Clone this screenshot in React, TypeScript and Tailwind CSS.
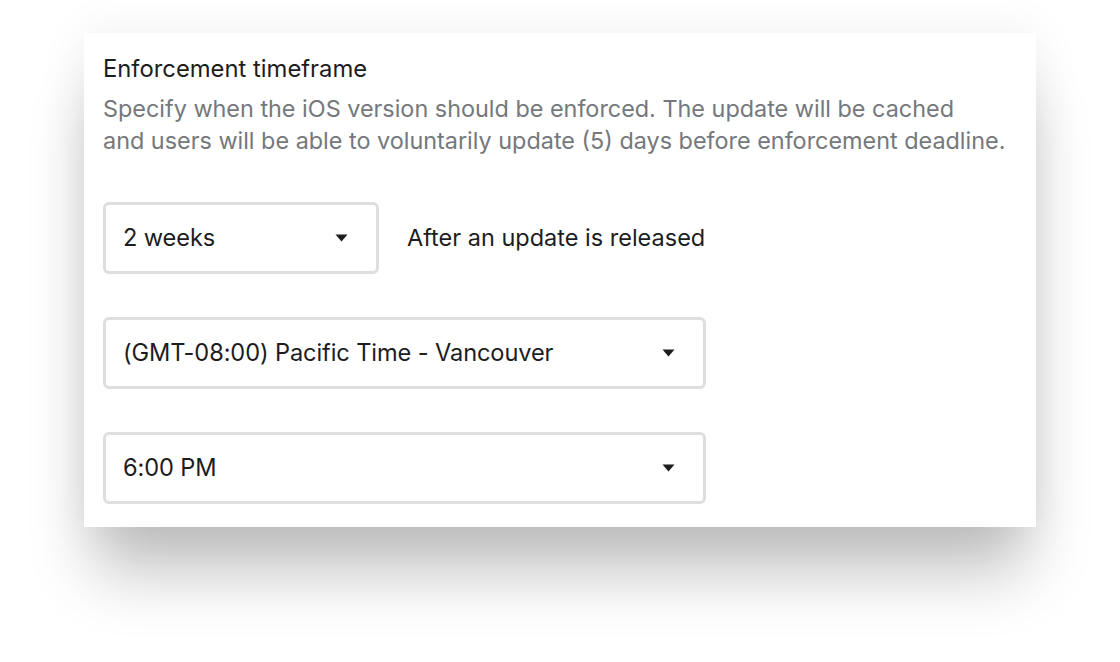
const font = { fontFamily: 'Inter, "Liberation Sans", sans-serif' }

function Caret() {
  return (
    <svg width="13" height="8" viewBox="0 0 13 8" className="shrink-0">
      <path d="M0.5 0.5 L12.5 0.5 L6.5 7.5 Z" fill="#1d1d1f" />
    </svg>
  )
}

interface SelectBoxProps {
  value: string
  width: string
}

function SelectBox({ value, width }: SelectBoxProps) {
  return (
    <div
      className={`${width} h-[72px] flex items-center justify-between rounded-[6px] border-[3px] border-[#dedede] bg-white pl-[17px] pr-[28px]`}
    >
      <span className="text-[23.6px] tracking-[-0.1px] text-[#1d1d1f]">{value}</span>
      <Caret />
    </div>
  )
}

export default function App() {
  return (
    <div className="w-[1120px] h-[662px] bg-white overflow-hidden" style={font}>
      <div className="pt-[33px] pl-[84px]">
        <section className="w-[952px] h-[494px] bg-white px-[19px] pt-[20px] shadow-[0_55px_60px_-10px_rgba(0,0,0,0.24),0_0_45px_rgba(0,0,0,0.07)]">
          <h2 className="text-[23.8px] leading-[32px] text-[#1d1d1f]">Enforcement timeframe</h2>
          <p className="mt-[8px] text-[23.4px] leading-[32px] text-[#75787c] whitespace-nowrap">
            Specify when the iOS version should be enforced. The update will be cached
            <br />
            and users will be able to voluntarily update (5) days before enforcement deadline.
          </p>
          <div className="mt-[45px] flex flex-col gap-[43px]">
            <div className="flex items-center gap-[28px]">
              <SelectBox value="2 weeks" width="w-[276px]" />
              <span className="text-[23.5px] text-[#1d1d1f]">After an update is released</span>
            </div>
            <SelectBox value="(GMT-08:00) Pacific Time - Vancouver" width="w-[603px]" />
            <SelectBox value="6:00 PM" width="w-[603px]" />
          </div>
        </section>
      </div>
    </div>
  )
}
